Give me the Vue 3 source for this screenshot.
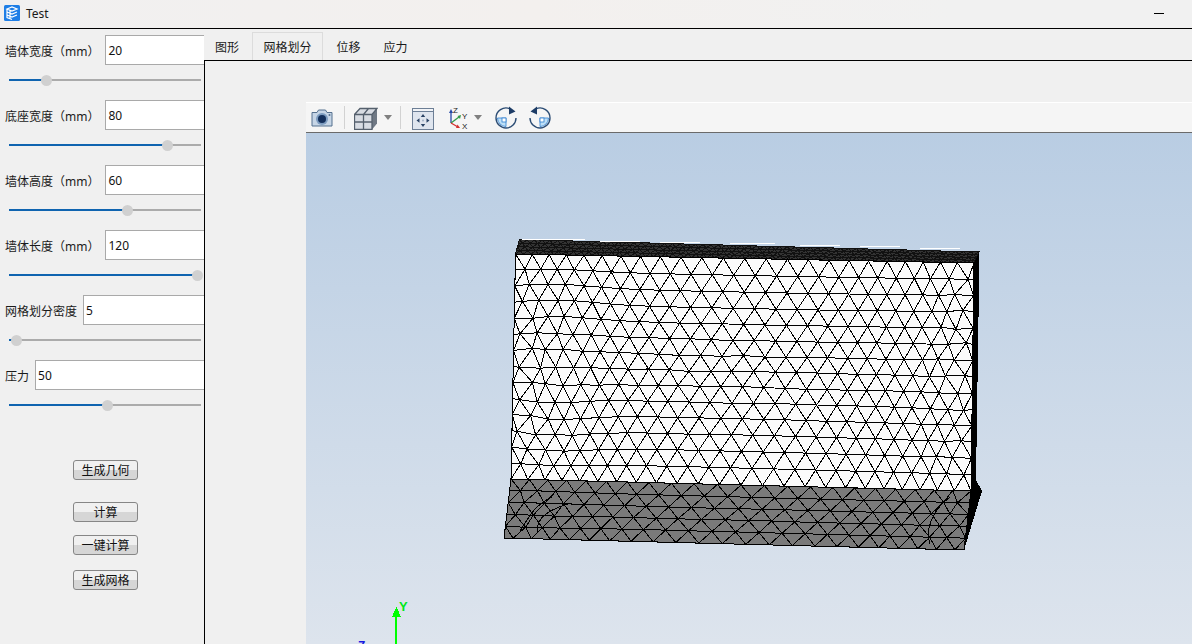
<script setup>
// left panel params: value shown in the box and slider handle position
const params = [
  { label: '墙体宽度（mm）', value: '20', pct: 19.3 },
  { label: '底座宽度（mm）', value: '80', pct: 82.3 },
  { label: '墙体高度（mm）', value: '60', pct: 61.5 },
  { label: '墙体长度（mm）', value: '120', pct: 98 },
  { label: '网格划分密度', value: '5', pct: 3.6 },
  { label: '压力', value: '50', pct: 51 }
];
const actions = ['生成几何', '计算', '一键计算', '生成网格'];
const tabs = ['图形', '网格划分', '位移', '应力'];

// quad corners: tl, tr, br, bl in page pixels
const FRONT = [[515.5, 254], [974, 263], [971, 491], [511, 479]];
const BASE = [[511, 479], [971, 491], [964, 550], [504, 538]];
const TOP = [[519.5, 239.5], [979, 252], [974, 263], [515.5, 254]];

function noise(a, b) {
  const s = Math.sin(a * 12.9898 + b * 78.233) * 43758.5453;
  return (s - Math.floor(s)) * 2 - 1;
}

function buildMesh(q, cols, rows, warp) {
  const point = (u, v, i, j) => {
    let du = 0;
    let dv = 0;
    if (warp) {
      // cells get smaller toward the side walls
      du = -0.02 * Math.sin(2 * Math.PI * u);
    }
    if (warp && u > 0 && u < 1 && v > 0 && v < 1) {
      const e = Math.max(1 - u / 0.2, 0) + Math.max(1 - (1 - u) / 0.16, 0);
      const mid = Math.exp(-(((u - 0.42) / 0.26) ** 2) - (((v - 0.55) / 0.28) ** 2));
      const fade = Math.sin(Math.PI * v);
      du += noise(i, j) * 0.008 * Math.min(e + 0.2 * mid, 1);
      dv = noise(j + 3, i + 7) * 0.012 * Math.min(e + 0.4 * mid, 1) * fade;
      // rows fan out from the centre line near the walls
      dv += warp * (v - 0.5) * fade * 0.09 * (Math.exp(-(((u - 0.12) / 0.1) ** 2)) - 0.4 * Math.sin(Math.PI * u));
    }
    const uu = u + du;
    const vv = v + dv;
    const tx = q[0][0] + (q[1][0] - q[0][0]) * uu;
    const ty = q[0][1] + (q[1][1] - q[0][1]) * uu;
    const bx = q[3][0] + (q[2][0] - q[3][0]) * uu;
    const by = q[3][1] + (q[2][1] - q[3][1]) * uu;
    return [tx + (bx - tx) * vv, ty + (by - ty) * vv];
  };
  const grid = [];
  for (let j = 0; j <= rows; j++) {
    const row = [];
    const odd = j % 2 === 1;
    const count = odd ? cols + 1 : cols;
    for (let i = 0; i <= count; i++) {
      const u = Math.min(Math.max((i - (odd ? 0.5 : 0)) / cols, 0), 1);
      row.push(point(u, j / rows, i, j));
    }
    grid.push(row);
  }
  const fmt = (p) => `${p[0].toFixed(1)} ${p[1].toFixed(1)}`;
  let d = '';
  grid.forEach((row) => {
    d += 'M' + row.map(fmt).join('L');
  });
  for (let j = 0; j < rows; j++) {
    const even = j % 2 === 0 ? grid[j] : grid[j + 1];
    const odd = j % 2 === 0 ? grid[j + 1] : grid[j];
    even.forEach((p, i) => {
      d += `M${fmt(odd[i])}L${fmt(p)}L${fmt(odd[i + 1])}`;
    });
  }
  return d;
}

const poly = (q) => q.map((p) => p.join(',')).join(' ');
const frontMesh = buildMesh(FRONT, 24, 14, 1);
const baseMesh = buildMesh(BASE, 22, 5, 0.6);
const topMesh = buildMesh(TOP, 60, 4, 0);
</script>

<template>
  <div class="window">
    <header class="titlebar">
      <svg class="app-icon" width="16" height="16" viewBox="0 0 16 16">
        <rect width="16" height="16" rx="1.5" fill="#1e7ee6" />
        <path d="M3 4 8 2l5 2-5 2zM3 4v8.500l5 2M3 7l5 2 5-2M3 10l5 2 5-2M6 5.500v8" fill="none" stroke="#fff" stroke-width="1.200" />
      </svg>
      <span class="title">Test</span>
      <span class="minimize"></span>
    </header>

    <div class="body">
      <aside class="panel">
        <div v-for="p in params" :key="p.label" class="param">
          <div class="param-row">
            <label class="param-label">{{ p.label }}</label>
            <input class="param-input" :value="p.value" readonly />
          </div>
          <div class="slider">
            <div class="slider-fill" :style="{ width: p.pct + '%' }"></div>
            <div class="slider-handle" :style="{ left: p.pct + '%' }"></div>
          </div>
        </div>
        <div class="actions">
          <button v-for="a in actions" :key="a" class="action">{{ a }}</button>
        </div>
      </aside>

      <main class="main">
        <nav class="tabs">
          <span v-for="t in tabs" :key="t" class="tab" :class="{ active: t === '网格划分' }">{{ t }}</span>
        </nav>
        <section class="pane">
          <div class="viewer">
            <div class="toolbar">
              <!-- camera -->
              <svg class="tool t-camera" width="24" height="24" viewBox="0 0 24 24">
                <path d="M2 6.500h5l1.500-2.500h7L17 6.500h5v13.500H2z" fill="#c6d5e6" stroke="#55708f" stroke-width="1" stroke-linejoin="round" />
                <circle cx="12" cy="13" r="6" fill="#7d9cc0" />
                <circle cx="12" cy="13" r="4" fill="#14305c" />
                <circle cx="19.500" cy="9" r="1" fill="#55708f" />
              </svg>
              <span class="sep"></span>
              <!-- cube -->
              <svg class="tool t-cube" width="24" height="24" viewBox="0 0 24 24">
                <path d="M0.500 8.500 6 2.500h17v15L18 23.500H0.500z" fill="#d8dce3" />
                <path d="M18 8.500 23 2.500v15L18 23.500z" fill="#6f7884" />
                <path d="M0.500 8.500H18v15H0.500zM0.500 8.500 6 2.500h17l-5 6M9.500 8.500v15M0.500 16h17.500M9.500 8.500l5-6" fill="none" stroke="#55606d" stroke-width="1.300" />
              </svg>
              <span class="caret c-first"></span>
              <span class="sep s-second"></span>
              <!-- fit all -->
              <svg class="tool t-fit" width="24" height="24" viewBox="0 0 24 24">
                <rect x="1.500" y="2.500" width="21" height="21" fill="#dfe5ee" stroke="#6d7f96" />
                <rect x="1.500" y="2.500" width="21" height="3" fill="#f2f4f7" stroke="#6d7f96" />
                <path d="M12 8l2.200 3h-4.400zM12 21l2.200-3h-4.400zM5.500 14.500l3-2.200v4.400zM18.500 14.500l-3-2.200v4.400z" fill="#2a4364" />
                <circle cx="12" cy="14.500" r="1" fill="#a3b1c4" />
              </svg>
              <!-- axis triad -->
              <svg class="tool t-axes" width="24" height="24" viewBox="0 0 24 24">
                <path d="M6 17V6" stroke="#2548a8" stroke-width="1.300" />
                <path d="M6 3l2 4H4z" fill="#2548a8" />
                <path d="M6 17l8-6" stroke="#2f9a48" stroke-width="1.300" />
                <path d="M16 9l-1 4-2.500-3z" fill="#2f9a48" />
                <path d="M6 17l7 4" stroke="#d43030" stroke-width="1.300" />
                <path d="M15 22l-4 0 1.500-3.500z" fill="#d43030" />
                <text x="8" y="7" class="axis-text">Z</text>
                <text x="17" y="13" class="axis-text">Y</text>
                <text x="17" y="23" class="axis-text">X</text>
              </svg>
              <span class="caret c-second"></span>
              <!-- rotate cw -->
              <svg class="tool t-rot1" width="24" height="24" viewBox="0 0 24 24">
                <path d="M12 12H3.500A8.500 8.500 0 0 0 12 20.500z" fill="#bfe0f7" stroke="#2f7fd0" stroke-width="0.800" />
                <rect x="8" y="12" width="4" height="4" fill="#fff" stroke="#2f7fd0" stroke-width="0.800" />
                <path d="M2 12A10 10 0 0 1 16 2.800M22 12A10 10 0 0 1 2 12" fill="none" stroke="#2b4c74" stroke-width="1.400" />
                <path d="M15 0.500 21.500 5.500 15 8.500z" fill="#1d3c66" />
              </svg>
              <!-- rotate ccw -->
              <svg class="tool t-rot2" width="24" height="24" viewBox="0 0 24 24">
                <path d="M12 12h8.500A8.500 8.500 0 0 1 12 20.500z" fill="#bfe0f7" stroke="#2f7fd0" stroke-width="0.800" />
                <rect x="12" y="12" width="4" height="4" fill="#fff" stroke="#2f7fd0" stroke-width="0.800" />
                <path d="M22 12A10 10 0 0 0 8 2.800M2 12A10 10 0 0 0 22 12" fill="none" stroke="#2b4c74" stroke-width="1.400" />
                <path d="M9 0.500 2.500 5.500 9 8.500z" fill="#1d3c66" />
              </svg>
            </div>
            <div class="canvas">
              <svg class="scene" width="886" height="511" viewBox="306 133 886 511" shape-rendering="crispEdges">
                <polygon :points="poly(TOP)" fill="#333" />
                <path :d="topMesh" fill="none" stroke="#111" stroke-width="1" />
                <path d="M522 239H585M600 241H640M660 242H700M730 243H775M800 245H840M860 246H900M920 248H960" stroke="#fff" stroke-width="1" />
                <polygon points="974,263 979.500,252 976,480 982,491 964,550 971,491" fill="#000" />
                <polygon :points="poly(FRONT)" fill="#fbfbfb" stroke="#000" />
                <path :d="frontMesh" fill="none" stroke="#000" stroke-width="1" />
                <polygon :points="poly(BASE)" fill="#7a7a7a" stroke="#000" />
                <path :d="baseMesh" fill="none" stroke="#000" stroke-width="1" />
                <path d="M520 531C530 515 535 505 552 497M538 533C535 520 545 510 572 503M930 544C925 530 932 510 950 497" fill="none" stroke="#000" stroke-width="1" />
                <path d="M396 644V611" stroke="#00ff00" stroke-width="1.500" />
                <path d="M396.500 606.500 401 617H392z" fill="#00ff00" />
              </svg>
              <span class="axis-y">Y</span>
              <span class="axis-z">Z</span>
            </div>
          </div>
        </section>
      </main>
    </div>
  </div>
</template>

<style>
html,
body {
  margin: 0;
  overflow: hidden;
}
</style>

<style scoped>
.window {
  width: 1192px;
  height: 644px;
  display: flex;
  flex-direction: column;
  overflow: hidden;
  background: #f0f0f0;
  font-family: "Noto Sans", "Noto Sans CJK SC", sans-serif;
  font-size: 12px;
  color: #1a1a1a;
}

.titlebar {
  height: 26px;
  padding: 0 0 2px 4px;
  flex: none;
  display: flex;
  align-items: center;
  border-bottom: 1px solid #000;
  background: linear-gradient(90deg, #f1f0f0, #f3f0ee 45%, #f1f1f1 80%);
}

.app-icon {
  flex: none;
}

.title {
  margin-left: 6px;
}

.minimize {
  width: 10px;
  height: 1px;
  background: #000;
  margin-left: auto;
  margin-right: 28px;
}

.body {
  flex: 1;
  min-height: 0;
  display: flex;
}

.panel {
  width: 204px;
  flex: none;
  overflow: hidden;
  padding: 6px 0 0 5px;
  box-sizing: border-box;
}

.param {
  height: 65px;
}

.param-row {
  display: flex;
  align-items: center;
  gap: 6px;
  height: 30px;
}

.param-label {
  white-space: nowrap;
  flex: none;
  padding-top: 2px;
}

.param-input {
  flex: none;
  width: 180px;
  height: 30px;
  box-sizing: border-box;
  border: 1px solid #a9a9a9;
  padding: 0 2px;
  background: #fff;
  font: inherit;
  color: #111;
  outline: none;
}

.slider {
  position: relative;
  height: 2px;
  width: 192px;
  margin: 14px 0 0 4px;
  background: #ababab;
}

.slider-fill {
  height: 100%;
  background: #0f64b0;
}

.slider-handle {
  position: absolute;
  top: -4px;
  width: 11px;
  height: 11px;
  margin-left: -5px;
  border-radius: 50%;
  background: #d0d0d0;
}

.actions {
  display: flex;
  flex-direction: column;
  align-items: flex-start;
  padding: 35px 0 0 68px;
}

.action {
  width: 65px;
  height: 20px;
  padding: 1px 0 0;
  box-sizing: border-box;
  border: 1px solid #868686;
  border-radius: 3px;
  background: linear-gradient(#f0f0f0 50%, #d6d6d6 50%);
  font: inherit;
  color: #111;
  line-height: 17px;
}

.action:nth-child(2) {
  margin-top: 22px;
}

.action:nth-child(3) {
  margin-top: 13px;
}

.action:nth-child(4) {
  margin-top: 15px;
}

.main {
  flex: 1;
  min-width: 0;
  display: flex;
  flex-direction: column;
}

.tabs {
  height: 31px;
  flex: none;
  display: flex;
  align-items: flex-end;
  padding-left: 1px;
}

.tab {
  width: 47px;
  height: 28px;
  line-height: 31px;
  text-align: center;
  flex: none;
  box-sizing: border-box;
}

.tab:first-child {
  padding-right: 3px;
}

.tab:nth-child(3) {
  margin-left: 2px;
}

.tab.active {
  width: 71px;
  border: 1px solid #dcdcdc;
  border-bottom: none;
  line-height: 29px;
}

.pane {
  flex: 1;
  min-height: 0;
  border-top: 1px solid #000;
  border-left: 1px solid #000;
  padding: 41px 0 0 101px;
  display: flex;
}

.viewer {
  flex: 1;
  display: flex;
  flex-direction: column;
}

.toolbar {
  height: 29px;
  flex: none;
  display: flex;
  align-items: center;
  background: #f5f5f5;
  border-top: 1px solid #fff;
  border-bottom: 1px solid #6a6a6a;
}

.tool {
  flex: none;
}

.t-camera {
  margin-left: 4px;
}

.t-axes {
  margin-left: 10px;
}

.t-rot1 {
  margin-left: 12px;
}

.t-rot2 {
  margin-left: 10px;
}

.sep {
  width: 1px;
  height: 23px;
  background: #d2d2d2;
  margin: 0 9px 0 10px;
  flex: none;
}

.caret {
  width: 0;
  height: 0;
  border-left: 4.5px solid transparent;
  border-right: 4.5px solid transparent;
  border-top: 5px solid #808080;
  flex: none;
}

.c-first {
  margin-left: 6px;
}

.s-second {
  margin: 0 10px 0 8px;
}

.c-second {
  margin-left: 5px;
}

.axis-text {
  font-family: "Liberation Sans", sans-serif;
  font-size: 8px;
  fill: #222;
}

.canvas {
  position: relative;
  flex: 1;
  min-height: 0;
  overflow: hidden;
  background: linear-gradient(#b9cde3, #dde4ed);
}

.scene {
  position: absolute;
  left: 0;
  top: 0;
}

.axis-y {
  position: absolute;
  left: 93px;
  top: 466px;
  color: #00e81a;
  font-family: "Liberation Sans", sans-serif;
  font-size: 13px;
  font-weight: bold;
  line-height: 15px;
}

.axis-z {
  position: absolute;
  left: 52px;
  top: 506px;
  color: #1818e0;
  font-family: "Liberation Sans", sans-serif;
  font-size: 12px;
  font-weight: bold;
  line-height: 14px;
}
</style>
